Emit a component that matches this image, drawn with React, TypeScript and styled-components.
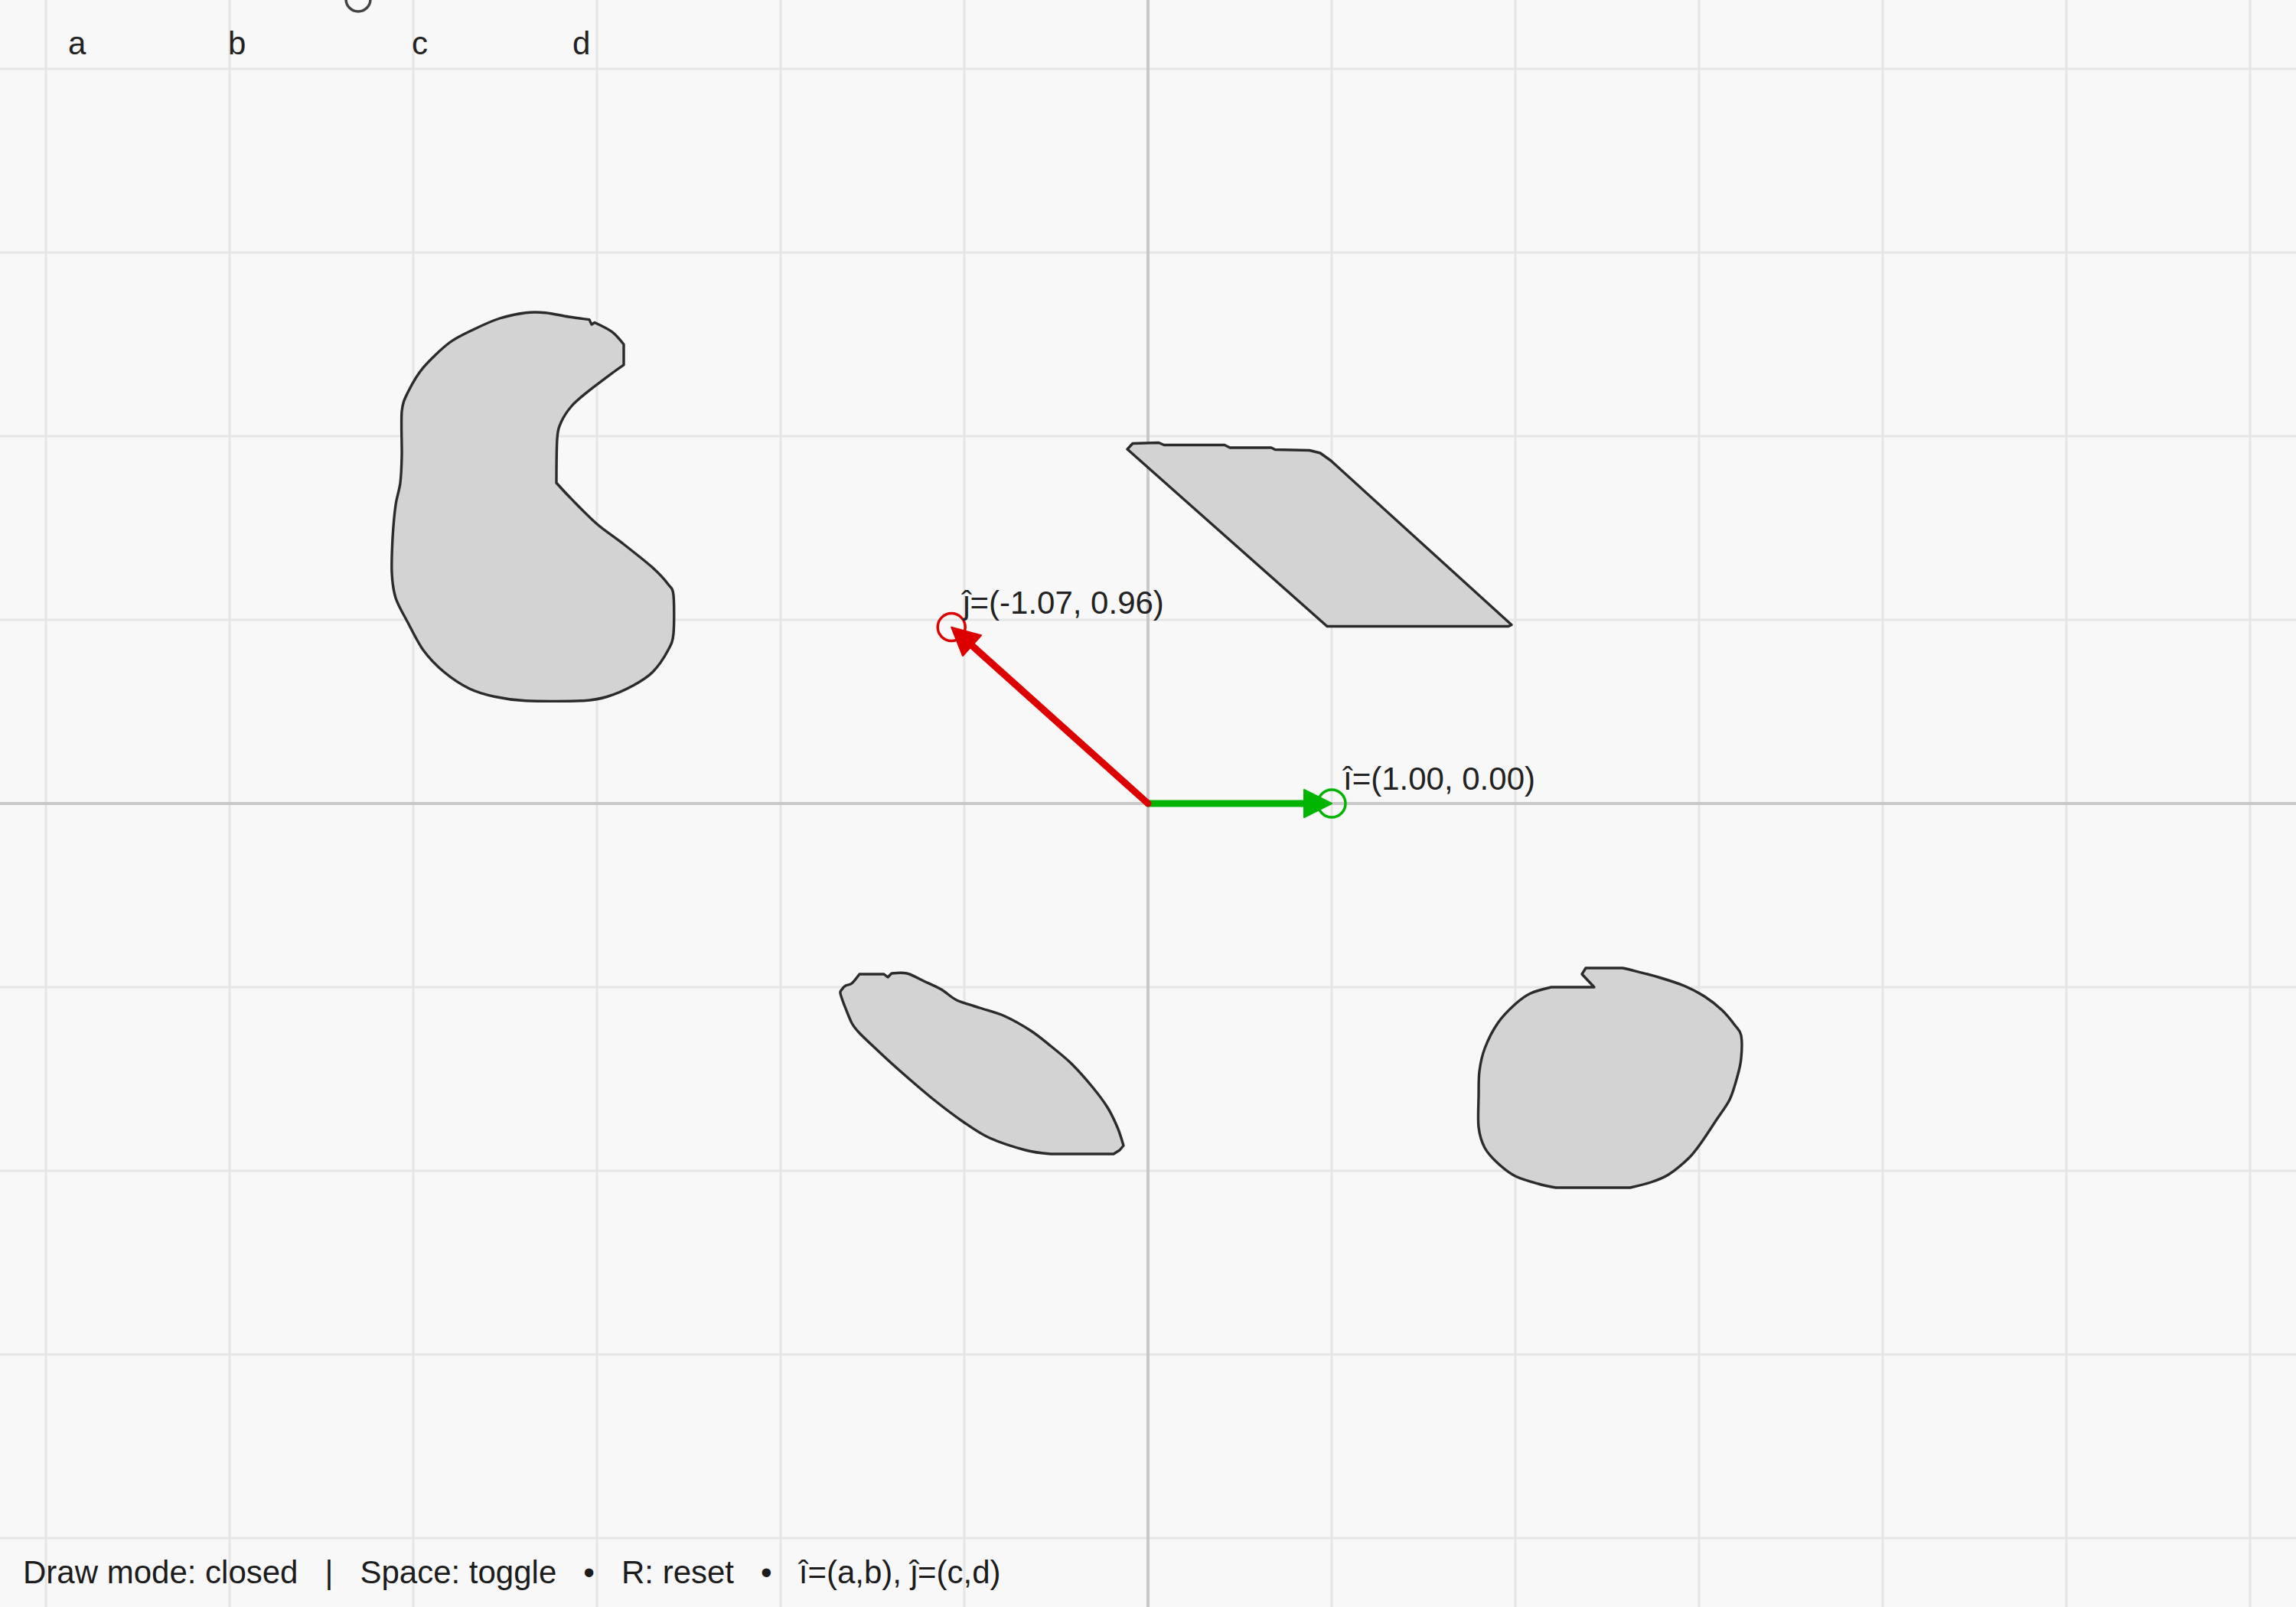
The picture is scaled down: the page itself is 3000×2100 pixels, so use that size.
import React from "react";
import styled, { createGlobalStyle } from "styled-components";

const W = 3000;
const H = 2100;
const OX = 1500;
const OY = 1050;
const UNIT = 240;
const FONT = `"Liberation Sans", Arial, sans-serif`;

const GlobalStyle = createGlobalStyle`
  html, body { margin: 0; padding: 0; background: #f8f8f8; }
  body { overflow: hidden; font-family: ${FONT}; }
`;

const Stage = styled.main`
  position: relative;
  width: ${W}px;
  height: ${H}px;
  background: #f8f8f8;
  overflow: hidden;
`;

const Plane = styled.svg`
  display: block;
  width: 100%;
  height: 100%;
`;

const GridLine = styled.line<{ $axis?: boolean }>`
  stroke: ${(p) => (p.$axis ? "#c9c9c9" : "#e5e5e5")};
  stroke-width: ${(p) => (p.$axis ? 4 : 3)}px;
`;

const Outline = styled.path`
  fill: #d3d3d3;
  stroke: #2b2b2b;
  stroke-width: 3.4px;
  stroke-linejoin: round;
`;

const Shaft = styled.line<{ $color: string }>`
  stroke: ${(p) => p.$color};
  stroke-width: 9px;
  stroke-linecap: round;
`;

const Head = styled.polygon<{ $color: string }>`
  fill: ${(p) => p.$color};
  stroke: ${(p) => p.$color};
  stroke-width: 2px;
  stroke-linejoin: round;
`;

const Handle = styled.circle<{ $color: string }>`
  fill: none;
  stroke: ${(p) => p.$color};
  stroke-width: 3.5px;
`;

const VectorLabel = styled.text`
  font-family: ${FONT};
  font-size: 42px;
  fill: #222;
`;

const SliderLabel = styled.span<{ $x: number }>`
  position: absolute;
  top: 36px;
  left: ${(p) => p.$x}px;
  font: 42px/42px ${FONT};
  color: #222;
`;

const StatusBar = styled.footer`
  position: absolute;
  left: 30px;
  bottom: 24px;
  font: 42px/42px ${FONT};
  color: #1c1c1c;
  white-space: pre;
`;

type Pt = [number, number];
type Shape = { pts: Pt[]; corners: number[]; smooth: boolean };

const kidney: Shape = {
  smooth: true,
  corners: [3, 4, 5, 7, 8, 14],
  pts: [
    [686.7, 408.7], [713, 408.7], [743, 414], [770, 417.6], [773, 424], [777, 421.5],
    [800, 433.8], [815, 450], [815, 476.8], [800, 487.5], [767, 512.6], [747, 530.5],
    [733, 552], [728, 573.5], [727, 631], [747, 652.4], [780, 684.7], [813, 709.7],
    [853, 742], [873, 763.5], [880, 777.8], [880, 828], [873, 849.5], [853, 878],
    [827, 896], [793, 910.5], [760, 915.8], [687, 915.8], [647, 910.5], [613, 899.7],
    [580, 878], [553, 849.5], [533, 813.7], [517, 781.4], [512, 749], [513, 702.6],
    [517, 659.6], [523, 631], [525, 595], [525, 537.7], [533, 512.6], [553, 480.4],
    [587, 448], [620, 430], [653, 416],
  ],
};

const parallelogram: Shape = {
  smooth: false,
  corners: [],
  pts: [
    [1473, 587], [1480, 579.5], [1514, 578.5], [1521, 581.5], [1600, 581.5], [1607, 585],
    [1661, 585], [1666, 587.5], [1711, 588.5], [1725, 592], [1739, 602], [1975, 816.5],
    [1971, 818.5], [1734, 818.5],
  ],
};

const leaf: Shape = {
  smooth: true,
  corners: [3, 4, 5, 6, 19, 20, 21, 22],
  pts: [
    [1100, 1293], [1105, 1288], [1113, 1285], [1123, 1273], [1155, 1273], [1160, 1277],
    [1165, 1272], [1185, 1272], [1207, 1282], [1230, 1293], [1250, 1307], [1280, 1317],
    [1313, 1328], [1347, 1347], [1373, 1367], [1400, 1390], [1427, 1420], [1447, 1447],
    [1460, 1473], [1468, 1497], [1463, 1503], [1455, 1508], [1373, 1508], [1340, 1503],
    [1293, 1487], [1260, 1467], [1220, 1437], [1180, 1403], [1147, 1373], [1123, 1350],
    [1113, 1337], [1103, 1313], [1098, 1298],
  ],
};

const roundish: Shape = {
  smooth: true,
  corners: [0, 1, 2, 18, 19, 31, 32],
  pts: [
    [2067, 1273], [2072, 1265], [2120, 1265], [2133, 1268], [2167, 1277], [2200, 1288],
    [2227, 1302], [2250, 1320], [2267, 1340], [2275, 1353], [2275, 1383], [2270, 1407],
    [2260, 1437], [2243, 1463], [2223, 1493], [2207, 1513], [2180, 1535], [2157, 1545],
    [2130, 1552], [2033, 1552], [2010, 1547], [1980, 1537], [1957, 1520], [1940, 1500],
    [1932, 1473], [1932, 1433], [1933, 1400], [1940, 1370], [1957, 1337], [1980, 1312],
    [2000, 1298], [2027, 1290], [2083, 1290],
  ],
};

// closed outline; a Catmull-Rom spline through the traced points,
// with zero tangents at the listed corner points so they stay sharp
const outlinePath = ({ pts, corners, smooth }: Shape, t = 0.45) => {
  const n = pts.length;
  if (!smooth) return "M" + pts.map(([x, y]) => `${x},${y}`).join(" L") + " Z";
  const sharp = new Set(corners);
  let d = `M${pts[0][0]},${pts[0][1]}`;
  for (let i = 0; i < n; i++) {
    const j = (i + 1) % n;
    const p0 = pts[(i - 1 + n) % n];
    const p1 = pts[i];
    const p2 = pts[j];
    const p3 = pts[(i + 2) % n];
    const k1 = sharp.has(i) ? 0 : t / 3;
    const k2 = sharp.has(j) ? 0 : t / 3;
    const c1x = p1[0] + (p2[0] - p0[0]) * k1;
    const c1y = p1[1] + (p2[1] - p0[1]) * k1;
    const c2x = p2[0] - (p3[0] - p1[0]) * k2;
    const c2y = p2[1] - (p3[1] - p1[1]) * k2;
    d += ` C${c1x.toFixed(1)},${c1y.toFixed(1)} ${c2x.toFixed(1)},${c2y.toFixed(1)} ${p2[0]},${p2[1]}`;
  }
  return d + " Z";
};

const shapes = [kidney, parallelogram, leaf, roundish].map((s) => outlinePath(s));

const verticals = Array.from({ length: 13 }, (_, k) => 60 + k * UNIT);
const horizontals = Array.from({ length: 9 }, (_, k) => 90 + k * UNIT);

type VecProps = { vx: number; vy: number; color: string; label: string };

function Vector({ vx, vy, color, label }: VecProps) {
  const tx = OX + vx * UNIT;
  const ty = OY - vy * UNIT;
  const dx = tx - OX;
  const dy = ty - OY;
  const len = Math.hypot(dx, dy);
  const ux = dx / len;
  const uy = dy / len;
  const headLen = 36;
  const half = 18;
  const bx = tx - ux * headLen;
  const by = ty - uy * headLen;
  const nx = -uy * half;
  const ny = ux * half;
  const head = `${tx},${ty} ${bx + nx},${by + ny} ${bx - nx},${by - ny}`;
  return (
    <g>
      <Shaft $color={color} x1={OX} y1={OY} x2={bx + ux * 4} y2={by + uy * 4} />
      <Head $color={color} points={head} />
      <Handle $color={color} cx={tx} cy={ty} r={18} />
      <VectorLabel x={tx + 15} y={ty - 18}>
        {label}
      </VectorLabel>
    </g>
  );
}

const sliderLabels: { name: string; x: number }[] = [
  { name: "a", x: 89 },
  { name: "b", x: 298 },
  { name: "c", x: 538 },
  { name: "d", x: 748 },
];

export default function App() {
  const jx = -1.07;
  const jy = 0.96;
  return (
    <>
      <GlobalStyle />
      <Stage>
        <Plane viewBox={`0 0 ${W} ${H}`} xmlns="http://www.w3.org/2000/svg">
          {verticals.map((x) => (
            <GridLine key={`v${x}`} x1={x} y1={0} x2={x} y2={H} />
          ))}
          {horizontals.map((y) => (
            <GridLine key={`h${y}`} x1={0} y1={y} x2={W} y2={y} />
          ))}
          <GridLine $axis x1={OX} y1={0} x2={OX} y2={H} />
          <GridLine $axis x1={0} y1={OY} x2={W} y2={OY} />

          {shapes.map((d, i) => (
            <Outline key={i} d={d} />
          ))}

          <Vector vx={1} vy={0} color="#00b400" label={"\u00EE=(1.00, 0.00)"} />
          <Vector
            vx={jx}
            vy={jy}
            color="#dc0000"
            label={`\u0135=(${jx.toFixed(2)}, ${jy.toFixed(2)})`}
          />

          <Handle $color="#444" cx={468} cy={-1} r={16} />
        </Plane>

        {sliderLabels.map((l) => (
          <SliderLabel key={l.name} $x={l.x}>
            {l.name}
          </SliderLabel>
        ))}

        <StatusBar>
          {"Draw mode: closed   |   Space: toggle   \u2022   R: reset   \u2022   \u00EE=(a,b), \u0135=(c,d)"}
        </StatusBar>
      </Stage>
    </>
  );
}
